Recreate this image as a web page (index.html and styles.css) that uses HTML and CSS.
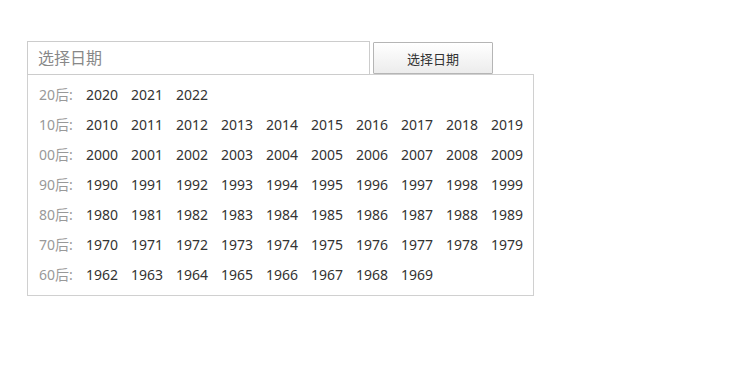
FILE: index.html
```html
<!DOCTYPE html>
<html lang="zh-CN">
<head>
    <meta charset="UTF-8">
    <meta name="viewport" content="width=device-width, initial-scale=1.0">
    <title>选择日期</title>
    <link rel="stylesheet" href="styles.css">
</head>
<body>

    <!-- Year picker -->
    <div class="picker">
        <div class="picker-top">
            <input type="text" class="date-input" placeholder="选择日期">
            <button class="date-btn">选择日期</button>
        </div>

        <!-- Year list, grouped by decade -->
        <div class="year-panel">
            <div class="year-row"><span class="decade">20后:</span><a class="year">2020</a><a class="year">2021</a><a class="year">2022</a></div>
            <div class="year-row"><span class="decade">10后:</span><a class="year">2010</a><a class="year">2011</a><a class="year">2012</a><a class="year">2013</a><a class="year">2014</a><a class="year">2015</a><a class="year">2016</a><a class="year">2017</a><a class="year">2018</a><a class="year">2019</a></div>
            <div class="year-row"><span class="decade">00后:</span><a class="year">2000</a><a class="year">2001</a><a class="year">2002</a><a class="year">2003</a><a class="year">2004</a><a class="year">2005</a><a class="year">2006</a><a class="year">2007</a><a class="year">2008</a><a class="year">2009</a></div>
            <div class="year-row"><span class="decade">90后:</span><a class="year">1990</a><a class="year">1991</a><a class="year">1992</a><a class="year">1993</a><a class="year">1994</a><a class="year">1995</a><a class="year">1996</a><a class="year">1997</a><a class="year">1998</a><a class="year">1999</a></div>
            <div class="year-row"><span class="decade">80后:</span><a class="year">1980</a><a class="year">1981</a><a class="year">1982</a><a class="year">1983</a><a class="year">1984</a><a class="year">1985</a><a class="year">1986</a><a class="year">1987</a><a class="year">1988</a><a class="year">1989</a></div>
            <div class="year-row"><span class="decade">70后:</span><a class="year">1970</a><a class="year">1971</a><a class="year">1972</a><a class="year">1973</a><a class="year">1974</a><a class="year">1975</a><a class="year">1976</a><a class="year">1977</a><a class="year">1978</a><a class="year">1979</a></div>
            <div class="year-row"><span class="decade">60后:</span><a class="year">1962</a><a class="year">1963</a><a class="year">1964</a><a class="year">1965</a><a class="year">1966</a><a class="year">1967</a><a class="year">1968</a><a class="year">1969</a></div>
        </div>
    </div>

</body>
</html>
```

FILE: styles.css
```css
/* General reset */
* {
    margin: 0;
    padding: 0;
    box-sizing: border-box;
}

body {
    font-family: "Noto Sans", "Noto Sans CJK SC", sans-serif;
    color: #333;
    background: #fff;
}

/* Picker wrapper */
.picker {
    padding: 41px 27px;
}

.picker-top {
    display: flex;
    align-items: center;
    gap: 3px;
    height: 34px;
}

/* Text input */
.date-input {
    width: 343px;
    height: 34px;
    padding: 0 10px;
    border: 1px solid #ccc;
    font-family: inherit;
    font-size: 16px;
    color: #333;
    outline: none;
}

.date-input::placeholder {
    color: #888;
}

/* Button */
.date-btn {
    width: 120px;
    height: 32px;
    border: 1px solid #b5b5b5;
    border-radius: 1px;
    background: linear-gradient(#ffffff, #ececec);
    font-family: inherit;
    font-size: 13px;
    color: #333;
    cursor: pointer;
}

/* Dropdown panel */
.year-panel {
    width: 507px;
    margin-top: -1px;
    padding: 5px 0 5px 11px;
    border: 1px solid #d0d0d0;
    background: #fff;
}

.year-row {
    display: flex;
    height: 30px;
    line-height: 30px;
    font-size: 14px;
    white-space: nowrap;
}

.decade {
    flex: none;
    width: 47px;
    color: #999;
}

.year {
    flex: none;
    width: 45px;
    color: #333;
    cursor: pointer;
}

.year:hover {
    color: #e4393c;
}
```
